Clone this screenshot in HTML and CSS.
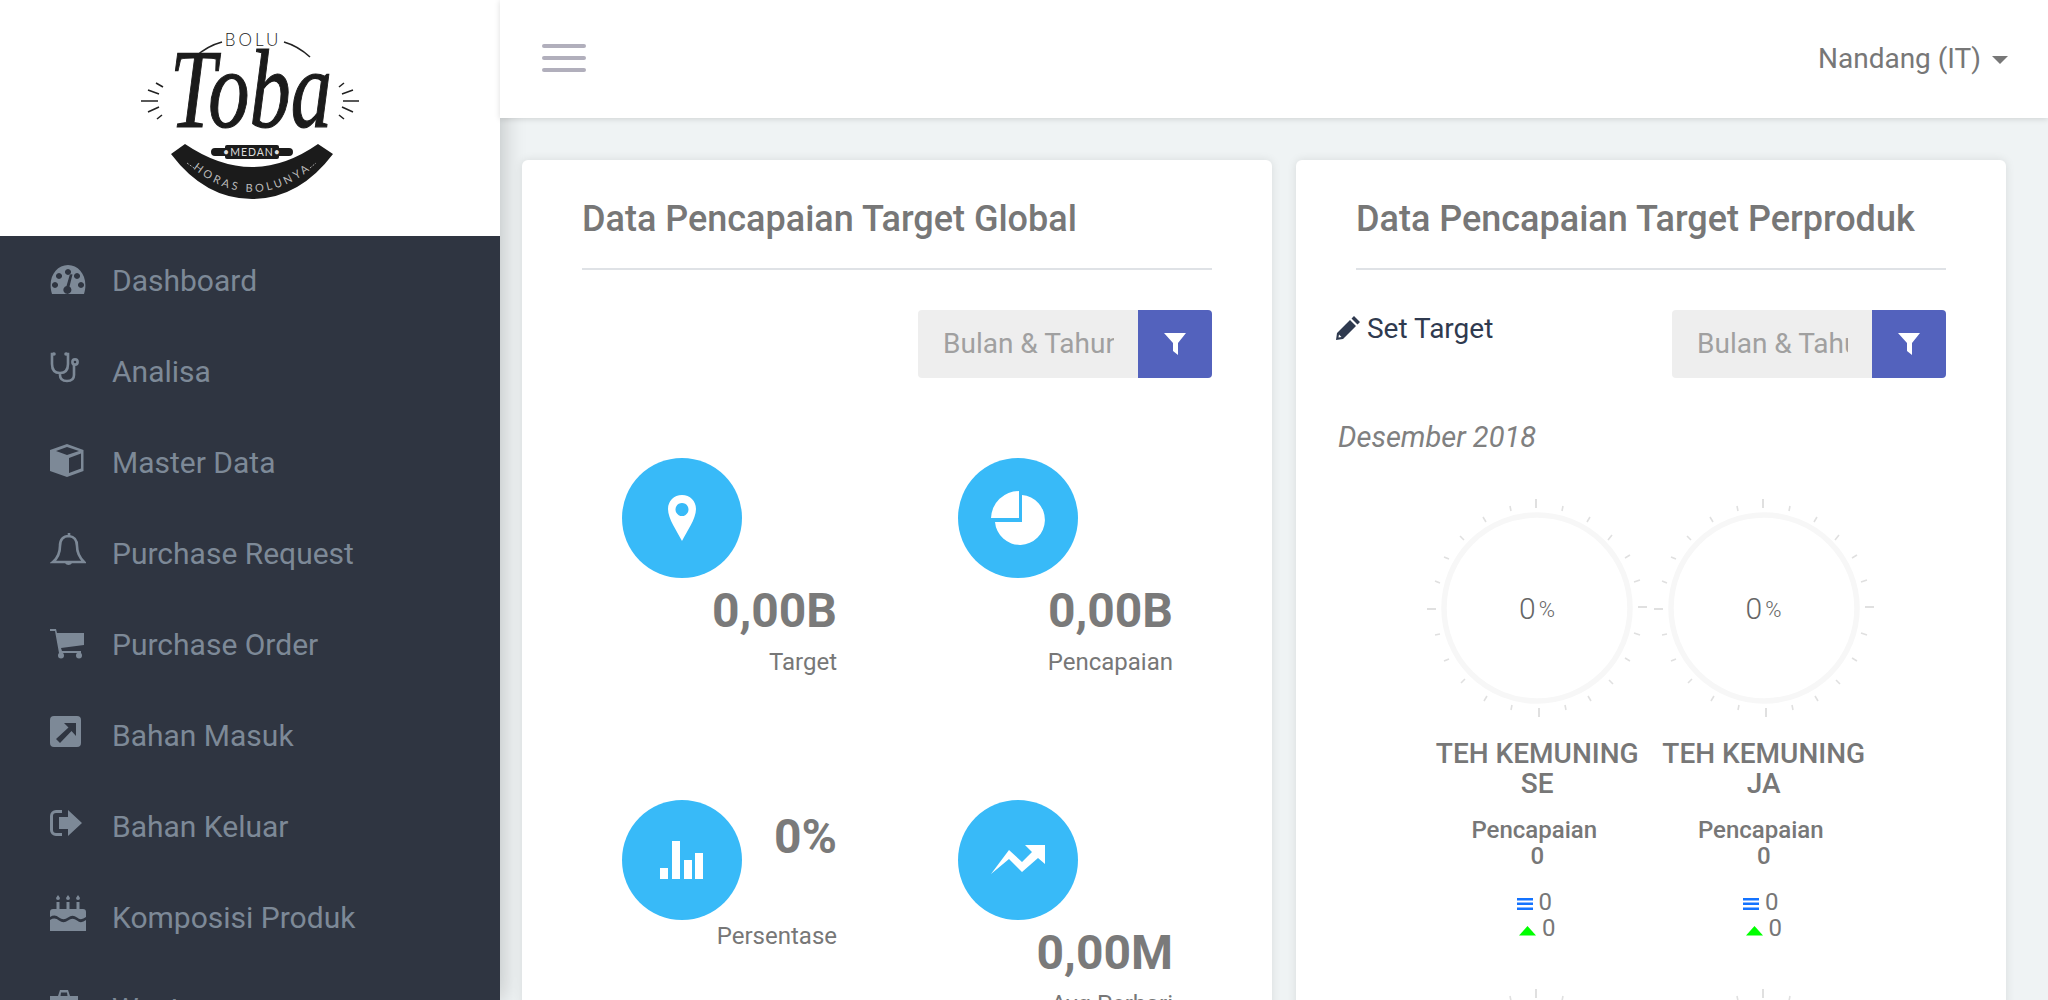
FILE: index.html
```html
<!DOCTYPE html>
<html lang="en">
  <head>
    <meta charset="utf-8">
    <title>Data Pencapaian Target</title>
    <link rel="stylesheet" href="styles.css">
  </head>
  <body>
    <svg class="defs" width="0" height="0">
      <defs>
        <g id="gauge-ticks" stroke="#e0e0e0">
          <g stroke-width="2">
            <path d="M-1 -100V-109M2 100V109M-101 1H-110M101 -1H110" />
          </g>
          <g stroke-width="1.6">
            <path d="M-26 -97L-27 -102M25 -97L26 -102M-51 -86L-54 -91M50 -86L53 -91M-73 -68L-77 -72M71 -68L75 -73" />
            <path d="M-88 -49L-93 -51M88 -50L93 -53M-97 -25L-102 -27M97 -26L103 -28" />
            <path d="M-97 26L-102 27M97 25L103 27M-88 51L-93 53M88 50L93 53M-72 71L-76 75M72 72L76 76M-50 88L-53 93M51 88L54 93M-25 97L-26 102M28 97L29 102" />
          </g>
        </g>
      </defs>
    </svg>

    <div class="layout">
      <aside class="sidebar">
        <div class="brand">
          <svg class="logo" width="500" height="236" viewBox="0 0 500 236">
            <!-- BOLU and the two arcs -->
            <text class="logo-bolu" x="253" y="46" text-anchor="middle">BOLU</text>
            <path d="M195 57Q207 46 222 42M284 42Q298 46 310 57" fill="none" stroke="#222" stroke-width="1.6" />
            <!-- rays -->
            <path d="M141 101H158M148 90L159 94M156 83L163 87M148 112L159 107M157 119L162 115M343 101H359M342 94L353 90M339 87L344 83M342 107L353 112M339 115L344 119" stroke="#222" stroke-width="1.6" fill="none" />
            <text class="logo-toba" x="170" y="127" textLength="162" lengthAdjust="spacingAndGlyphs">Toba</text>
            <!-- rolling pin -->
            <path d="M211 152a4 4 0 0 1 4 -4h10v8h-10a4 4 0 0 1 -4 -4zM278 148h11a4 4 0 0 1 0 8h-11z" fill="#1b1b1b" />
            <rect x="225" y="145" width="54" height="14" rx="2" fill="#1b1b1b" />
            <text class="logo-medan" x="252" y="156" text-anchor="middle">•MEDAN•</text>
            <!-- banner -->
            <path d="M185 144L171 154Q205 199 252 199Q299 199 333 154L318 144Q285 167 252 167Q219 167 185 144Z" fill="#1b1b1b" />
            <path d="M187 163L194 168M310 168L316 163" stroke="#aaa" stroke-width="1" stroke-dasharray="2 1.500" />
            <path id="banner-line" d="M190 166Q252 218 315 166" fill="none" />
            <text class="logo-horas"><textPath href="#banner-line" startOffset="50%" text-anchor="middle">HORAS BOLUNYA</textPath></text>
          </svg>
        </div>
        <nav class="nav">
          <a class="nav-item" href="#">
            <svg class="nav-icon" viewBox="0 0 36 44"><path fill-rule="evenodd" d="M2 36C-3 20 6 7 18 7s21 13 16 29zM18 11a3 3 0 1 0 .01 0zM9 15a3 3 0 1 0 .01 0zM27 15a3 3 0 1 0 .01 0zM5 24a3 3 0 1 0 .01 0zM31 24a3 3 0 1 0 .01 0zM20 16l-3.500 12a4 4 0 1 0 3 .5l3 -12z" /></svg>
            <span>Dashboard</span>
          </a>
          <a class="nav-item" href="#">
            <svg class="nav-icon" viewBox="0 0 36 44"><path class="line" d="M4 5H2V15Q2 24 10 24T18 15V5H16M10 24V26Q10 32 17 32T24 26V16" /><circle cx="4" cy="5" r="1.800" /><circle cx="16" cy="5" r="1.800" /><circle class="line" cx="25" cy="13" r="2.600" /></svg>
            <span>Analisa</span>
          </a>
          <a class="nav-item" href="#">
            <svg class="nav-icon" viewBox="0 0 36 44"><path fill-rule="evenodd" d="M17 4L33.500 10V31L17 37L0 31V10zM17 7L6 11L17 15L29 11zM19 18V33L31 28.500V13.500z" /></svg>
            <span>Master Data</span>
          </a>
          <a class="nav-item" href="#">
            <svg class="nav-icon" viewBox="0 0 36 44"><path class="line" d="M3 31Q10 25 10 15T19 5Q27 6 27 15T34 31zM19 5V2" /><path d="M15 32a4 4 0 0 0 7 0z" /></svg>
            <span>Purchase Request</span>
          </a>
          <a class="nav-item" href="#">
            <svg class="nav-icon" viewBox="0 0 36 44"><path d="M0 7H6L7 11H34V23L11 26L12 29H31V31H9L5 9H0z" /><circle cx="11" cy="33.500" r="3" /><circle cx="29" cy="33.500" r="3" /></svg>
            <span>Purchase Order</span>
          </a>
          <a class="nav-item" href="#">
            <svg class="nav-icon" viewBox="0 0 36 44"><path fill-rule="evenodd" d="M4 3H27a4 4 0 0 1 4 4V30a4 4 0 0 1 -4 4H4a4 4 0 0 1 -4 -4V7a4 4 0 0 1 4 -4zM14 10L18.500 14.500L6 26L10 30L21.500 18L26 23V10z" /></svg>
            <span>Bahan Masuk</span>
          </a>
          <a class="nav-item" href="#">
            <svg class="nav-icon" viewBox="0 0 36 44"><path d="M12 6H6a6 6 0 0 0 -6 6V26a6 6 0 0 0 6 6H12V29H6a3 3 0 0 1 -3 -3V12a3 3 0 0 1 3 -3H12zM18 6L32 19L18 32V25H9V13H18z" /></svg>
            <span>Bahan Keluar</span>
          </a>
          <a class="nav-item" href="#">
            <svg class="nav-icon" viewBox="0 0 36 44"><path d="M8 0L10 3A2 2 0 0 1 6 3zM18 0L20 3A2 2 0 0 1 16 3zM28 0L30 3A2 2 0 0 1 26 3zM6.500 7H9.500V14H16.500V7H19.500V14H26.500V7H29.500V14H33a3 3 0 0 1 3 3V22Q31 26 27 22.500Q22.500 19 18 22.500Q13.500 26 9 22.500Q5 19 0 22V17a3 3 0 0 1 3 -3H6.500zM0 25Q5 22 9 25.500Q13.500 29 18 25.500Q22.500 22 27 25.500Q31 29 36 25V36H0z" /></svg>
            <span>Komposisi Produk</span>
          </a>
          <a class="nav-item" href="#">
            <svg class="nav-icon" viewBox="0 0 36 44"><path fill-rule="evenodd" d="M10 4H18L20 10H28V14H0V10H8zM11 6.500L10.500 10H17.500L17 6.500zM2 16H26V40H2z" /></svg>
            <span>Waste</span>
          </a>
        </nav>
      </aside>

      <div class="content">
        <header class="topbar">
          <button class="burger"><span></span><span></span><span></span></button>
          <div class="user">Nandang (IT) <i class="caret"></i></div>
        </header>

        <main class="cards">
          <section class="card card-global">
            <h2 class="card-title">Data Pencapaian Target Global</h2>
            <div class="toolbar">
              <div class="filter">
                <input class="filter-input" type="text" placeholder="Bulan &amp; Tahun">
                <button class="filter-btn"><svg width="24" height="22" viewBox="0 0 24 22"><path d="M1 0H23L15 10V22L10 18V10z" /></svg></button>
              </div>
            </div>
            <div class="stats">
              <div class="stat">
                <div class="stat-icon">
                  <svg width="30" height="46" viewBox="0 0 30 46"><path fill-rule="evenodd" d="M15 0C7 0 1 6 1 14C1 24 10 36 15 46C20 36 29 24 29 14C29 6 23 0 15 0zM15 8a6.500 6.500 0 1 1 -.01 0z" /></svg>
                </div>
                <h3 class="stat-value">0,00B</h3>
                <p class="stat-label">Target</p>
              </div>
              <div class="stat">
                <div class="stat-icon">
                  <svg width="54" height="54" viewBox="0 0 54 54"><path d="M28 0V27H0A28 28 0 0 1 28 0z" /><path d="M31 4A25 25 0 1 1 4 31H31z" /></svg>
                </div>
                <h3 class="stat-value">0,00B</h3>
                <p class="stat-label">Pencapaian</p>
              </div>
              <div class="stat">
                <div class="stat-icon">
                  <svg width="44" height="38" viewBox="0 0 44 38"><path d="M0 27H8V38H0zM12 0H20V38H12zM24 19H32V38H24zM35 12H43V38H35z" /></svg>
                </div>
                <h3 class="stat-value stat-inline">0%</h3>
                <p class="stat-label">Persentase</p>
              </div>
              <div class="stat">
                <div class="stat-icon">
                  <svg width="54" height="32" viewBox="0 0 54 32"><path d="M0 30L18 6L31 18L41 8L34 1H54V20L47 14L31 28L18 15z" /></svg>
                </div>
                <h3 class="stat-value">0,00M</h3>
                <p class="stat-label">Avg Perhari</p>
              </div>
            </div>
          </section>

          <section class="card card-produk">
            <h2 class="card-title">Data Pencapaian Target Perproduk</h2>
            <div class="toolbar toolbar-split">
              <a class="set-target" href="#">
                <svg width="24" height="24" viewBox="0 0 24 24"><path fill-rule="evenodd" d="M18 0L24 6L21.500 8.500L15.500 2.500zM14 4L20 10L7 23L0 24L1 17zM3 18.500L2.500 21.500L5.500 21z" /></svg>
                Set Target
              </a>
              <div class="filter">
                <input class="filter-input filter-input-short" type="text" placeholder="Bulan &amp; Tahun">
                <button class="filter-btn"><svg width="24" height="22" viewBox="0 0 24 22"><path d="M1 0H23L15 10V22L10 18V10z" /></svg></button>
              </div>
            </div>
            <p class="period">Desember 2018</p>
            <div class="gauges">
              <div class="gauge-item">
                <div class="gauge">
                  <svg width="226" height="226" viewBox="-113 -113 226 226"><use href="#gauge-ticks" /><circle r="93" fill="none" stroke="#f7f7f7" stroke-width="5.500" /></svg>
                  <div class="gauge-value">0<small>%</small></div>
                </div>
                <h4 class="gauge-name">TEH KEMUNING SE</h4>
                <p class="gauge-label">Pencapaian&nbsp;<br>0</p>
                <p class="gauge-row"><svg width="16" height="12" viewBox="0 0 16 12"><path d="M0 0H16V2.500H0zM0 4.500H16V7H0zM0 9.500H16V12H0z" fill="#1473ff" /></svg> 0&nbsp;</p>
                <p class="gauge-row"><svg width="17" height="10" viewBox="0 0 17 10"><path d="M8.500 0L17 9.500H0z" fill="#00ff00" /></svg> 0</p>
              </div>
              <div class="gauge-item">
                <div class="gauge">
                  <svg width="226" height="226" viewBox="-113 -113 226 226"><use href="#gauge-ticks" /><circle r="93" fill="none" stroke="#f7f7f7" stroke-width="5.500" /></svg>
                  <div class="gauge-value">0<small>%</small></div>
                </div>
                <h4 class="gauge-name">TEH KEMUNING JA</h4>
                <p class="gauge-label">Pencapaian&nbsp;<br>0</p>
                <p class="gauge-row"><svg width="16" height="12" viewBox="0 0 16 12"><path d="M0 0H16V2.500H0zM0 4.500H16V7H0zM0 9.500H16V12H0z" fill="#1473ff" /></svg> 0&nbsp;</p>
                <p class="gauge-row"><svg width="17" height="10" viewBox="0 0 17 10"><path d="M8.500 0L17 9.500H0z" fill="#00ff00" /></svg> 0</p>
              </div>
              <div class="gauge-item">
                <div class="gauge">
                  <svg width="226" height="226" viewBox="-113 -113 226 226"><use href="#gauge-ticks" /><circle r="93" fill="none" stroke="#f7f7f7" stroke-width="5.500" /></svg>
                </div>
              </div>
              <div class="gauge-item">
                <div class="gauge">
                  <svg width="226" height="226" viewBox="-113 -113 226 226"><use href="#gauge-ticks" /><circle r="93" fill="none" stroke="#f7f7f7" stroke-width="5.500" /></svg>
                </div>
              </div>
            </div>
          </section>
        </main>
      </div>
    </div>
  </body>
</html>
```

FILE: styles.css
```css
html, body {
    height: 100%;
    overflow: hidden;
}

body {
    margin: 0;
    font-family: Roboto, "Liberation Sans", sans-serif;
    color: #777777;
    background-color: #eff3f4;
}

.defs {
    position: absolute;
}

.layout {
    display: flex;
    height: 1000px;
    overflow: hidden;
}

/* sidebar */
.sidebar {
    flex: 0 0 500px;
    background-color: #2f3541;
    position: relative;
    z-index: 1;
    box-shadow: 3px 0 22px rgba(0, 0, 0, 0.2);
}

.brand {
    height: 236px;
    background-color: #ffffff;
}

.logo {
    display: block;
}

.logo-bolu {
    font-family: Lato, sans-serif;
    font-size: 17px;
    font-weight: 300;
    letter-spacing: 3px;
    fill: #222222;
}

.logo-toba {
    font-family: "Liberation Serif", serif;
    font-style: italic;
    font-size: 112px;
    fill: #1b1b1b;
    stroke: #1b1b1b;
    stroke-width: 1.200;
}

.logo-medan {
    font-family: Lato, sans-serif;
    font-size: 10.500px;
    letter-spacing: 1px;
    fill: #dddddd;
}

.logo-horas {
    font-family: Lato, sans-serif;
    font-size: 11px;
    letter-spacing: 3px;
    fill: #bbbbbb;
}

.nav {
    display: flex;
    flex-direction: column;
    gap: 5px;
    padding-top: 1px;
}

.nav-item {
    height: 86px;
    display: flex;
    align-items: center;
    gap: 26px;
    padding-left: 50px;
    font-size: 30px;
    color: #7d8997;
    text-decoration: none;
    flex-shrink: 0;
}

.nav-icon {
    flex: 0 0 36px;
    height: 44px;
    fill: #7d8997;
}

.nav-icon .line {
    fill: none;
    stroke: #7d8997;
    stroke-width: 2.600;
}

/* top bar */
.content {
    flex: 1;
    min-width: 0;
}

.topbar {
    height: 118px;
    box-sizing: border-box;
    padding: 0 40px 2px 42px;
    background-color: #ffffff;
    box-shadow: 0 1px 6px rgba(0, 0, 0, 0.14);
    display: flex;
    align-items: center;
    justify-content: space-between;
    position: relative;
    z-index: 3;
}

.burger {
    width: 44px;
    padding: 0;
    border: 0;
    background: none;
    display: flex;
    flex-direction: column;
    gap: 8px;
}

.burger span {
    display: block;
    height: 4px;
    border-radius: 2px;
    background-color: #b1afbc;
}

.user {
    font-size: 28px;
    color: #777777;
}

.caret {
    display: inline-block;
    margin-left: 4px;
    vertical-align: middle;
    border-top: 8px solid #777777;
    border-left: 8px solid transparent;
    border-right: 8px solid transparent;
}

/* cards */
.cards {
    display: grid;
    grid-template-columns: 750px 710px;
    gap: 24px;
    padding: 42px 0 0 22px;
    position: relative;
    z-index: 2;
}

.card {
    background-color: #ffffff;
    border-radius: 6px;
    box-shadow: 0 0 10px rgba(0, 0, 0, 0.1);
    height: 1300px;
    padding: 0 40px;
}

.card-title {
    margin: 0 20px;
    height: 110px;
    line-height: 118px;
    box-sizing: border-box;
    border-bottom: 2px solid #dfe2e6;
    font-size: 36px;
    font-weight: 500;
    color: #777777;
}

.toolbar {
    display: flex;
    justify-content: flex-end;
    margin: 40px 20px 0;
}

.toolbar-split {
    justify-content: space-between;
    margin-left: 0;
}

.filter {
    display: flex;
    height: 68px;
    border-radius: 4px;
    overflow: hidden;
}

.filter-input {
    width: 220px;
    box-sizing: border-box;
    border: 0;
    padding: 0 24px 2px 25px;
    background-color: #eeeeee;
    font-family: Roboto, sans-serif;
    font-size: 28px;
}

.filter-input-short {
    width: 200px;
}

.filter-input::placeholder {
    color: #a0a0a0;
}

.filter-btn {
    width: 74px;
    border: 0;
    padding: 0;
    background-color: #5362bd;
    display: flex;
    align-items: center;
    justify-content: center;
}

.filter-btn svg {
    fill: #ffffff;
}

/* stat tiles */
.stats {
    display: grid;
    grid-template-columns: 215px 215px;
    column-gap: 121px;
    row-gap: 122px;
    margin: 80px 0 0 60px;
}

.stat-icon {
    float: left;
    width: 120px;
    height: 120px;
    border-radius: 50%;
    background-color: #38baf8;
    display: flex;
    align-items: center;
    justify-content: center;
}

.stat-icon svg {
    fill: #ffffff;
}

.stat-value {
    margin: 0 0 3px;
    text-align: right;
    font-size: 48px;
    line-height: 65px;
    font-weight: 700;
    color: #7a7a7a;
}

.stat-inline {
    margin-top: 4px;
    margin-bottom: 0;
}

.stat-label {
    margin: 0;
    text-align: right;
    font-size: 24px;
    line-height: 32px;
    font-weight: 400;
}

/* products */
.set-target {
    color: #2f3a4f;
    font-size: 28px;
    line-height: 38px;
    text-decoration: none;
}

.set-target svg {
    fill: #2f3a4f;
    vertical-align: -2px;
}

.period {
    margin: 42px 0 0 2px;
    font-size: 29px;
    font-style: italic;
    font-weight: 400;
    color: #808080;
}

.gauges {
    display: grid;
    grid-template-columns: 226.500px 226.500px;
    row-gap: 44px;
    margin: 41px 0 0 88px;
    text-align: center;
}

.gauge {
    position: relative;
    width: 226px;
    height: 226px;
    margin-bottom: 18px;
}

.gauge svg {
    display: block;
}

.gauge-value {
    position: absolute;
    inset: 0;
    display: flex;
    align-items: center;
    justify-content: center;
    font-size: 30px;
    font-weight: 300;
    color: #666666;
}

.gauge-value small {
    font-size: 22px;
    margin-left: 3px;
    margin-top: 3px;
}

.gauge-name {
    margin: 0;
    font-size: 28px;
    line-height: 30px;
    font-weight: 500;
}

.gauge-label {
    margin: 18px 0 20px;
    font-size: 24px;
    line-height: 26px;
    font-weight: 500;
}

.gauge-row {
    margin: 0;
    font-size: 24px;
    line-height: 26px;
}
```
